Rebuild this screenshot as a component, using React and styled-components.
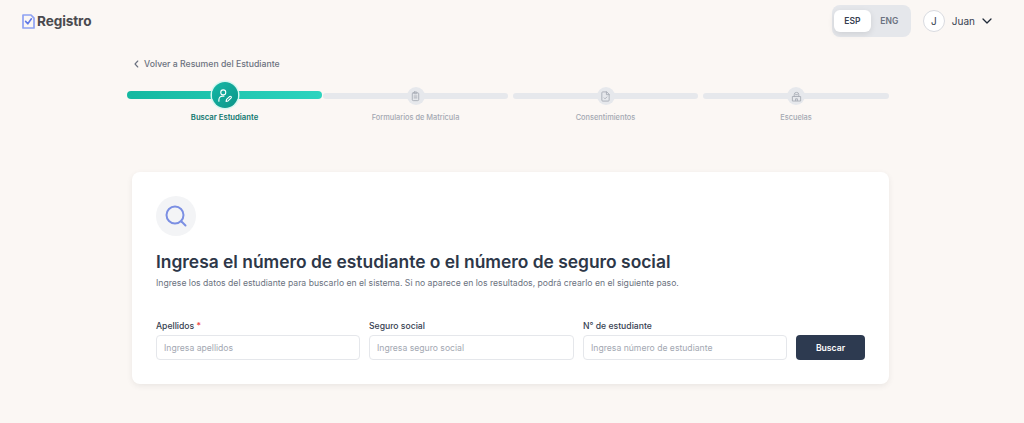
import React from 'react';
import styled, { createGlobalStyle } from 'styled-components';

const Global = createGlobalStyle`
  html, body { margin: 0; padding: 0; background: #fbf7f4; }
  body { font-family: Inter, "Liberation Sans", sans-serif; width: 1024px; height: 423px; overflow: hidden; }
  * { box-sizing: border-box; }
`;

const Page = styled.div`
  width: 1024px;
  height: 423px;
  background: #fbf7f4;
  display: flex;
  flex-direction: column;
`;

const Header = styled.header`
  height: 42px;
  padding: 5px 31px 0 22px;
  display: flex;
  justify-content: space-between;
  align-items: flex-start;
`;

const Logo = styled.div`
  height: 32px;
  display: flex;
  align-items: center;
  gap: 2px;
  font-family: Inter, sans-serif;
  font-size: 13.6px;
  font-weight: 700;
  color: #4a4a4e;
  letter-spacing: -0.1px;
`;

const HeaderRight = styled.div`
  display: flex;
  align-items: center;
  gap: 12px;
`;

const LangSwitch = styled.div`
  width: 79px;
  height: 32px;
  border-radius: 8px;
  background: #e5e7eb;
  padding: 5px 2px;
  display: flex;
`;

const LangOption = styled.div`
  width: 37px;
  height: 22px;
  border-radius: 6px;
  display: flex;
  align-items: center;
  justify-content: center;
  font-size: 8.5px;
  font-weight: 600;
  color: ${p => (p.$active ? '#374151' : '#6b7280')};
  background: ${p => (p.$active ? '#ffffff' : 'transparent')};
  box-shadow: ${p => (p.$active ? '0 2px 6px rgba(0,0,0,0.1)' : 'none')};
`;

const User = styled.div`
  display: flex;
  align-items: center;
  font-size: 10px;
  color: #374151;
`;

const Avatar = styled.div`
  width: 22px;
  height: 22px;
  border-radius: 50%;
  background: #fff;
  border: 1px solid #d9dbe0;
  display: flex;
  align-items: center;
  justify-content: center;
  margin-right: 7px;
  font-size: 10px;
`;

const Chevron = styled.svg`
  margin-left: 6px;
`;

const Main = styled.main`
  padding: 0 135px 0 127px;
`;

const BackLink = styled.div`
  height: 14px;
  margin: 15px 0 0 6px;
  display: flex;
  align-items: center;
  gap: 4px;
  font-size: 8.7px;
  font-weight: 500;
  color: #6b7280;
`;

const Stepper = styled.div`
  margin-top: 13px;
  display: flex;
  height: 44px;
`;

const Step = styled.div`
  width: ${p => p.$w}px;
  margin-left: ${p => p.$ml}px;
  position: relative;
  display: flex;
  flex-direction: column;
  align-items: center;
`;

const Track = styled.div`
  height: ${p => (p.$active ? 8 : 6)}px;
  width: 100%;
  margin-top: ${p => (p.$active ? 7 : 9)}px;
  border-radius: 4px;
  background: ${p => (p.$active ? 'linear-gradient(90deg,#14b8a0,#2dd4bf)' : '#e6e8ec')};
`;

const Dot = styled.div`
  position: absolute;
  top: ${p => (p.$active ? -2 : 3)}px;
  left: 50%;
  transform: translateX(-50%);
  width: ${p => (p.$active ? 26 : 18)}px;
  height: ${p => (p.$active ? 26 : 18)}px;
  border-radius: 50%;
  display: flex;
  align-items: center;
  justify-content: center;
  background: ${p => (p.$active ? 'linear-gradient(135deg,#14b8a6,#0d9488)' : '#e6e8ec')};
  box-shadow: ${p => (p.$active ? '0 0 0 1.5px #d5f8f1' : 'none')};
  color: ${p => (p.$active ? '#fff' : '#a8adb6')};
`;

const StepLabel = styled.div`
  margin-top: 13px;
  font-size: ${p => (p.$active ? 7.7 : 7.4)}px;
  line-height: 11px;
  font-weight: ${p => (p.$active ? 600 : 500)};
  color: ${p => (p.$active ? '#0f766e' : '#a3a8b2')};
  white-space: nowrap;
`;

const Card = styled.section`
  margin: 44px 0 0 5px;
  width: 757px;
  height: 212px;
  background: #fff;
  border-radius: 8px;
  box-shadow: 0 2px 6px rgba(0,0,0,0.07);
  padding: 24px 24px 0;
`;

const IconCircle = styled.div`
  width: 40px;
  height: 40px;
  border-radius: 50%;
  background: #f3f4f6;
  display: flex;
  align-items: center;
  justify-content: center;
`;

const Title = styled.h1`
  margin: 14px 0 0;
  font-size: 17.4px;
  line-height: 24px;
  font-weight: 600;
  color: #2d3748;
`;

const Subtitle = styled.p`
  margin: 2px 0 0;
  font-size: 8.65px;
  line-height: 14px;
  color: #6b7280;
`;

const Form = styled.div`
  margin-top: 30px;
  display: grid;
  grid-template-columns: 204px 205px 204px 69px;
  column-gap: 9px;
  align-items: end;
`;

const Field = styled.div`
  display: flex;
  flex-direction: column;
  gap: 3px;
`;

const Label = styled.label`
  font-size: 8.65px;
  line-height: 12px;
  font-weight: 500;
  color: #374151;
`;

const Required = styled.span`
  color: #ef4444;
`;

const Input = styled.div`
  height: 25px;
  border: 1px solid #e5e7eb;
  border-radius: 4px;
  padding: 0 7px;
  display: flex;
  align-items: center;
  font-size: 8.65px;
  color: #a3a8b2;
  background: #fff;
`;

const Button = styled.div`
  height: 25px;
  border-radius: 4px;
  background: #2d3a50;
  color: #fff;
  font-size: 8.65px;
  font-weight: 600;
  display: flex;
  align-items: center;
  justify-content: center;
`;

const StepIcon = ({ children }) => (
  <svg width="11" height="11" viewBox="0 0 24 24" fill="none" stroke="currentColor" strokeWidth="2" strokeLinecap="round" strokeLinejoin="round">
    {children}
  </svg>
);

const steps = [
  {
    label: 'Buscar Estudiante', w: 195, ml: 0, active: true,
    icon: (
      <svg width="15" height="15" viewBox="0 0 24 24" fill="none" stroke="currentColor" strokeWidth="1.8" strokeLinecap="round" strokeLinejoin="round">
        <circle cx="10" cy="7" r="4" />
        <path d="M3 21v-2a6 6 0 0 1 6-6h2" />
        <path d="M20.5 13.5a1.6 1.6 0 0 1 2.2 2.2l-5 5-3.2.8.8-3.2z" />
      </svg>
    ),
  },
  {
    label: 'Formularios de Matrícula', w: 185, ml: 1,
    icon: (
      <StepIcon>
        <rect x="5" y="4" width="14" height="17" rx="2" />
        <rect x="9" y="2" width="6" height="4" rx="1" />
        <path d="M9 11h6M9 15h6" />
      </StepIcon>
    ),
  },
  {
    label: 'Consentimientos', w: 185, ml: 5,
    icon: (
      <StepIcon>
        <path d="M14 2H6a2 2 0 0 0-2 2v16a2 2 0 0 0 2 2h12a2 2 0 0 0 2-2V8z" />
        <path d="M14 2v6h6" />
        <path d="m9 15 2 2 4-4" />
      </StepIcon>
    ),
  },
  {
    label: 'Escuelas', w: 186, ml: 5,
    icon: (
      <StepIcon>
        <path d="M7 12V8a5 5 0 0 1 10 0v4" />
        <path d="M3 21v-9h18v9z" />
        <path d="M10 21v-4h4v4" />
        <path d="M10 8h4" />
      </StepIcon>
    ),
  },
];

export default function App() {
  return (
    <Page>
      <Global />
      <Header>
        <Logo>
          <svg width="13" height="15" viewBox="0 0 13 15" fill="none" strokeLinejoin="round" strokeLinecap="round">
            <path d="M9 1H1v13h11V4.2z" stroke="#8fa2f2" strokeWidth="1.7" />
            <path d="M3.6 7.4l2.2 2.4 3.6-5" stroke="#5f78e6" strokeWidth="1.6" />
          </svg>
          Registro
        </Logo>
        <HeaderRight>
          <LangSwitch>
            <LangOption $active>ESP</LangOption>
            <LangOption>ENG</LangOption>
          </LangSwitch>
          <User>
            <Avatar>J</Avatar>
            Juan
            <Chevron width="12" height="12" viewBox="0 0 24 24" fill="none" stroke="#1f2937" strokeWidth="2.5" strokeLinecap="round" strokeLinejoin="round">
              <path d="m4 8 8 8 8-8" />
            </Chevron>
          </User>
        </HeaderRight>
      </Header>
      <Main>
        <BackLink>
          <svg width="7" height="8" viewBox="0 0 7 8" fill="none" stroke="#6b7280" strokeWidth="1.1" strokeLinecap="round" strokeLinejoin="round">
            <path d="M4.8 1 2 4l2.8 3" />
          </svg>
          Volver a Resumen del Estudiante
        </BackLink>
        <Stepper>
          {steps.map(s => (
            <Step key={s.label} $w={s.w} $ml={s.ml}>
              <Track $active={s.active} />
              <Dot $active={s.active}>{s.icon}</Dot>
              <StepLabel $active={s.active}>{s.label}</StepLabel>
            </Step>
          ))}
        </Stepper>
        <Card>
          <IconCircle>
            <svg width="24" height="24" viewBox="0 0 24 24" fill="none" stroke="#7b8fe3" strokeWidth="2" strokeLinecap="round">
              <circle cx="11" cy="11" r="8.5" />
              <path d="m17.5 17.5 4 4" />
            </svg>
          </IconCircle>
          <Title>Ingresa el número de estudiante o el número de seguro social</Title>
          <Subtitle>Ingrese los datos del estudiante para buscarlo en el sistema. Si no aparece en los resultados, podrá crearlo en el siguiente paso.</Subtitle>
          <Form>
            <Field>
              <Label>Apellidos <Required>*</Required></Label>
              <Input>Ingresa apellidos</Input>
            </Field>
            <Field>
              <Label>Seguro social</Label>
              <Input>Ingresa seguro social</Input>
            </Field>
            <Field>
              <Label>N° de estudiante</Label>
              <Input>Ingresa número de estudiante</Input>
            </Field>
            <Button>Buscar</Button>
          </Form>
        </Card>
      </Main>
    </Page>
  );
}
